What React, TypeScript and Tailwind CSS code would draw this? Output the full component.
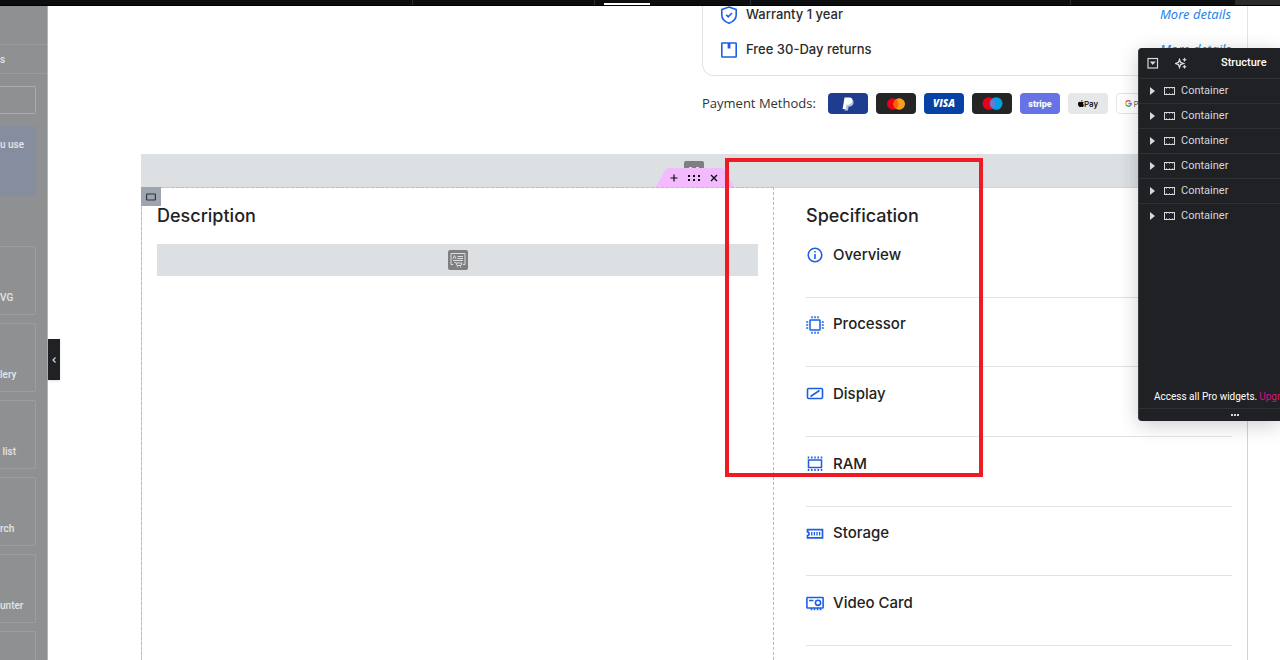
import React from 'react';

const widgetCards = ['VG', 'lery', ' list', 'rch', 'unter', ''];

const containers = [1, 2, 3, 4, 5, 6];

const InfoIcon = () => (
  <svg className="h-[18px] w-[18px]" viewBox="1 1 18 18" fill="none" stroke="#1a5fe6" strokeWidth="1.6">
    <circle cx="10" cy="10" r="6.8" />
    <path d="M10 9v5M10 6v1.6" />
  </svg>
);

const ProcessorIcon = () => (
  <svg className="h-[18px] w-[18px]" viewBox="1 1 18 18" fill="none" stroke="#1a5fe6" strokeWidth="1.5">
    <rect x="5" y="5" width="10" height="10" rx="0.6" />
    <path d="M7 1.2v2M10 1.2v2M13 1.2v2M7 16.8v2M10 16.8v2M13 16.8v2M1.2 7h2M1.2 10h2M1.2 13h2M16.8 7h2M16.8 10h2M16.8 13h2" />
  </svg>
);

const DisplayIcon = () => (
  <svg className="h-[18px] w-[18px]" viewBox="1 1 18 18" fill="none" stroke="#1a5fe6" strokeWidth="1.6">
    <rect x="2.5" y="4.5" width="15" height="10" rx="1.2" />
    <path d="M5.5 12.5l9-6" />
  </svg>
);

const RamIcon = () => (
  <svg className="h-[18px] w-[18px]" viewBox="1 1 18 18" fill="none" stroke="#1a5fe6" strokeWidth="1.5">
    <rect x="3.5" y="6" width="13" height="7.5" />
    <path d="M3.5 2.5v2M6.8 2.5v2M10 2.5v2M13.2 2.5v2M16.5 2.5v2M3.5 15v2M6.8 15v2M10 15v2M13.2 15v2M16.5 15v2" />
  </svg>
);

const StorageIcon = () => (
  <svg className="h-[18px] w-[18px]" viewBox="1 1 18 18" fill="none" stroke="#1a5fe6" strokeWidth="1.7">
    <path d="M2.5 5.6h15v8.2h-15v-2.2c2 0 2-3.8 0-3.8z" />
    <path d="M6.8 8v3.4M9.4 8v3.4M12 8v3.4M14.6 8v3.4" strokeWidth="1.3" />
  </svg>
);

const VideoCardIcon = () => (
  <svg className="h-[18px] w-[18px]" viewBox="1 1 18 18" fill="none" stroke="#1a5fe6" strokeWidth="1.6">
    <rect x="1.9" y="4.5" width="16.2" height="10.5" rx="0.6" />
    <circle cx="13" cy="9.8" r="2.6" />
    <path d="M4 7.5h4.5M6.5 15v2.2M9.5 15v2.2M12.5 15v2.2M15.5 15v2.2" />
  </svg>
);

const specs = [
  { name: 'Overview', icon: InfoIcon },
  { name: 'Processor', icon: ProcessorIcon },
  { name: 'Display', icon: DisplayIcon },
  { name: 'RAM', icon: RamIcon },
  { name: 'Storage', icon: StorageIcon },
  { name: 'Video Card', icon: VideoCardIcon },
];

const TopBar: React.FC = () => (
  <div className="flex h-[6px] shrink-0 border-b border-black bg-[#0c0d0e]">
    <div className="w-[413px] border-r border-[#2b2c2e]" />
    <div className="w-[182px] border-r border-[#2b2c2e]" />
    <div className="flex w-[156px] items-end border-r border-[#2b2c2e] pl-[9px]">
      <div className="h-0.5 w-[46px] bg-white" />
    </div>
    <div className="w-[320px] border-r border-[#2b2c2e]" />
    <div className="flex-1" />
    <div className="w-[45px] bg-[#2b2b2c]" />
  </div>
);

const Sidebar: React.FC = () => (
  <aside className="w-12 shrink-0 overflow-hidden border-r border-[#b3b4b6] bg-[#8e9092] font-['Roboto',sans-serif] text-[10px] font-medium text-[#e3e5e8]">
    <div className="h-[39px] border-b border-[#999b9d]" />
    <div className="flex h-[29px] items-center border-b border-[#999b9d]">s</div>
    <input
      aria-label="Search widgets"
      className="mt-3 block h-7 w-9 rounded-r-xs border border-l-0 border-[#aaacae] bg-transparent"
    />
    <div className="mt-3 h-[70px] w-9 rounded-r-xs bg-[#868d9f] pt-3 leading-[14px] whitespace-nowrap">
      u use
    </div>
    <div className="mt-[50px] flex flex-col gap-2">
      {widgetCards.map((label, index) => (
        <div
          key={index}
          className="flex h-[69px] w-9 shrink-0 items-end rounded-r-xs border border-l-0 border-[#9c9ea0] pb-[9px] leading-[14px] whitespace-pre"
        >
          {label}
        </div>
      ))}
    </div>
  </aside>
);

const PaymentMethods: React.FC = () => (
  <div className="mt-[17px] ml-[561px] flex h-[21px] items-center gap-2">
    <span className="mr-2 w-[110px] shrink-0 font-['Open_Sans',sans-serif] text-[13px] font-medium whitespace-nowrap text-[#333]">
      Payment Methods:
    </span>
    <div className="flex h-[21px] w-10 shrink-0 items-center justify-center rounded bg-[#1f3d8f]">
      <svg className="h-4 w-4" viewBox="0 0 16 16">
        <path d="M5.5 3.5h5c2.8 0 3.6 2 2.8 4.2-.7 2-2.2 2.8-4.6 2.8l-.8 4H4.5z" fill="#b8c3df" />
        <path d="M4.5 1.5h4.8c2.6 0 3.6 1.6 3 3.8-.6 2.4-2.2 3.4-4.6 3.4H6.4l-.8 4.3H2.6z" fill="#fff" />
      </svg>
    </div>
    <div className="flex h-[21px] w-10 shrink-0 items-center justify-center rounded bg-[#252525]">
      <svg className="h-3 w-5" viewBox="0 0 20 12">
        <circle cx="6.8" cy="6" r="5.8" fill="#eb001b" />
        <circle cx="13.2" cy="6" r="5.8" fill="#f79e1b" />
        <path d="M10 1.2a5.8 5.8 0 0 1 0 9.6a5.8 5.8 0 0 1 0-9.6z" fill="#ff5f00" />
      </svg>
    </div>
    <div className="flex h-[21px] w-10 shrink-0 items-center justify-center rounded bg-[#0642a5] font-['Open_Sans',sans-serif] text-[10px] font-extrabold text-white italic">
      VISA
    </div>
    <div className="flex h-[21px] w-10 shrink-0 items-center justify-center rounded bg-[#252525]">
      <svg className="h-[13px] w-[21px]" viewBox="0 0 21 13">
        <circle cx="6.8" cy="6.5" r="6.3" fill="#eb001b" />
        <circle cx="14.2" cy="6.5" r="6.3" fill="#00a2e5" />
        <path d="M10.5 1.4a6.3 6.3 0 0 1 0 10.2a6.3 6.3 0 0 1 0-10.2z" fill="#7375cf" />
      </svg>
    </div>
    <div className="flex h-[21px] w-10 shrink-0 items-center justify-center rounded bg-[#6772e5] font-['Roboto',sans-serif] text-[9px] leading-3 font-extrabold text-white">
      stripe
    </div>
    <div className="flex h-[21px] w-10 shrink-0 items-center justify-center rounded bg-[#e6e7e9] font-['Inter',sans-serif] text-[8px] font-medium text-black">
      <svg className="h-[7px] w-[6px]" viewBox="0 0 12 14">
        <path d="M8.8 0c0 1.6-1.2 3-2.8 3.1C5.9 1.6 7.2.2 8.8 0zM11.6 4.9C9.5 6.2 9.7 8.9 12 9.9 11.3 12 10 14 8.7 14c-1 0-1.3-.6-2.5-.6S4.600 14 3.700 14C1.900 14 0 10.700 0 8c0-2.800 1.700-4.400 3.500-4.400 1.100 0 2 .7 2.700.7s1.700-.8 3-.8c.9 0 1.800.5 2.400 1.400z" />
      </svg>
      Pay
    </div>
    <div className="flex h-[21px] w-10 shrink-0 items-center justify-center gap-0.5 rounded border border-[#e3e4e6] bg-white font-['Inter',sans-serif] text-[8px] text-[#5f6368]">
      <svg className="h-[7px] w-[7px]" viewBox="0 0 14 14" fill="none" strokeWidth="2.6">
        <path d="M11 3A5.6 5.6 0 0 0 2.2 4.2" stroke="#ea4335" />
        <path d="M2.2 4.2a5.6 5.6 0 0 0 0 5.6" stroke="#fbbc04" />
        <path d="M2.2 9.8A5.6 5.6 0 0 0 10.8 11" stroke="#34a853" />
        <path d="M10.8 11a5.6 5.6 0 0 0 1.8-4H7" stroke="#4285f4" />
      </svg>
      Pay
    </div>
  </div>
);

const ProductInfo: React.FC = () => (
  <div className="ml-[561px] flex h-[70px] flex-col justify-end gap-[15px] overflow-hidden rounded-b-xl border border-t-0 border-[#e2e3e5] pr-4 pb-[15px] pl-4 font-['Inter',sans-serif] text-[13px] font-medium text-[#2b2b2b]">
    <div className="flex h-5 shrink-0 items-center">
      <svg className="mr-[7px] h-5 w-5" viewBox="0 0 20 20" fill="none" stroke="#1a5fe6" strokeWidth="1.6">
        <path d="M10 2L2.8 4.5V10c0 4 3 6.8 7.2 8.3 4.2-1.5 7.2-4.3 7.2-8.3V4.5z" strokeLinejoin="round" />
        <path d="M7.2 9.8l2 2 3.8-3.8" />
      </svg>
      <span className="flex-1">Warranty 1 year</span>
      <a href="#" className="font-['Noto_Sans',sans-serif] font-normal text-[#2b83ea] italic">More details</a>
    </div>
    <div className="flex h-5 shrink-0 items-center">
      <svg className="mr-[7px] h-5 w-5" viewBox="0 0 20 20" fill="none" stroke="#1a5fe6" strokeWidth="1.6">
        <rect x="2.8" y="3" width="14.4" height="14" rx="0.6" />
        <path d="M10 3v5.5" strokeWidth="2.8" />
      </svg>
      <span className="flex-1">Free 30-Day returns</span>
      <a href="#" className="font-['Noto_Sans',sans-serif] font-normal text-[#2b83ea] italic">More details</a>
    </div>
  </div>
);

const SectionHandle: React.FC = () => (
  <>
    <div className="absolute top-[7px] left-[543px] h-5 w-5 rounded-xs bg-[#7d7f81] p-1">
      <svg className="h-3 w-3" viewBox="0 0 12 12" fill="none" stroke="#d5d8dc">
        <path d="M1 2.5h3M8 2.5h3" />
      </svg>
    </div>
    <div className="absolute top-3.5 left-[515px] flex h-[19px] w-[78px] items-center justify-center pr-0.5">
      <svg className="absolute inset-0 h-full w-full" viewBox="0 0 78 19">
        <path d="M0 19L8.5 3Q10 0 13 0H65Q68 0 69.5 3L78 19z" fill="#f3bafd" />
      </svg>
      <div className="relative flex items-center">
        <button aria-label="Add" className="flex h-4 w-5 items-center justify-center">
          <svg className="h-2 w-2" viewBox="0 0 8 8" stroke="#0c0d0e" strokeWidth="1.2">
            <path d="M4 0.5v7M0.5 4h7" />
          </svg>
        </button>
        <button aria-label="Edit container" className="flex h-4 w-5 items-center justify-center">
          <svg className="h-2 w-3" viewBox="0 0 12 8" fill="#0c0d0e">
            <path d="M0 1h2v2H0zM5 1h2v2H5zM10 1h2v2h-2zM0 5h2v2H0zM5 5h2v2H5zM10 5h2v2h-2z" />
          </svg>
        </button>
        <button aria-label="Delete" className="flex h-4 w-5 items-center justify-center">
          <svg className="h-2 w-2" viewBox="0 0 8 8" stroke="#0c0d0e" strokeWidth="1.3">
            <path d="M1 1l6 6M7 1l-6 6" />
          </svg>
        </button>
      </div>
    </div>
  </>
);

const Editor: React.FC = () => (
  <main className="mr-8 ml-[93px] flex min-w-0 flex-1 flex-col">
    <ProductInfo />
    <PaymentMethods />

    <div className="relative mt-10 h-[33px] shrink-0 bg-[#dce0e3]">
      <SectionHandle />
    </div>

    <div className="flex flex-1 border border-b-0 border-[#f3bafd] font-['Inter',sans-serif] text-[#222]">
      {/* Description column */}
      <section className="relative -mt-px -ml-px w-[633px] shrink-0 border border-b-0 border-dashed border-[#b9bcc8] px-[15px] pt-4">
        <button
          aria-label="Edit column"
          className="absolute -top-px -left-px flex h-[19px] w-5 items-center justify-center bg-[#9da5ae]"
        >
          <svg className="h-2 w-2.5" viewBox="0 0 10 8" fill="none" stroke="#30363c" strokeWidth="1.2">
            <rect x="0.6" y="1" width="8.8" height="6" rx="0.5" />
          </svg>
        </button>
        <h2 className="text-[18px] leading-6 font-medium">Description</h2>
        <div className="mt-4 flex h-8 items-center justify-center bg-[#dce0e3]">
          <svg className="h-5 w-5" viewBox="0 0 20 20" fill="none" stroke="#dcdfe2">
            <rect width="20" height="20" rx="2" fill="#7d7f81" stroke="none" />
            <path d="M5 14.5H3V3.5h14v11h-2M9.5 6.5H15M9.5 8.5H15M5 10.5h10M5 8.8L6.5 5.5 8 8.8M6.5 12.5h1.5l1 3h4l1-2.5H8.5" />
            <path d="M9 17h1M12 17h1" />
          </svg>
        </div>
      </section>

      {/* Specification column */}
      <section className="flex-1 pt-4 pr-[15px] pl-8">
        <h2 className="text-[18px] leading-6 font-medium">Specification</h2>
        <ul className="grid h-[418px] grid-rows-6">
          {specs.map(({ name, icon: Icon }) => (
            <li key={name} className="border-b border-[#e2e3e5] pt-[15px]">
              <div className="flex h-6 items-center gap-[9px] text-[15px] font-medium">
                <Icon />
                {name}
              </div>
            </li>
          ))}
        </ul>
      </section>
    </div>
  </main>
);

const StructurePanel: React.FC = () => (
  <div className="absolute top-12 right-0 flex h-[373px] w-[142px] flex-col overflow-hidden rounded-l border-l border-[#3a3c40] bg-[#1f2124] font-['Roboto',sans-serif] text-[11px] text-[#d5d8dc] shadow-[0_4px_20px_rgba(0,0,0,0.2)]">
    <div className="flex h-[30px] shrink-0 items-center pl-2">
      <button aria-label="Expand all" className="w-7">
        <svg className="h-3 w-3" viewBox="0 0 12 12" fill="none" stroke="#d5d8dc" strokeWidth="1.2">
          <rect x="1" y="1.5" width="9.5" height="9.5" />
          <path d="M2.8 4.6h6L5.8 8z" fill="#d5d8dc" stroke="none" />
        </svg>
      </button>
      <button aria-label="Generate" className="w-[46px]">
        <svg className="h-3 w-3" viewBox="0 0 12 12" fill="#d5d8dc">
          <path d="M4.5 2.5l1.1 2.9L8.5 6.5 5.6 7.6 4.5 10.5 3.4 7.6.5 6.5l2.9-1.1z" fill="none" stroke="#d5d8dc" strokeWidth="1.3" />
          <path d="M9.5.4l.8 1.5 1.5.8-1.5.8-.8 1.5-.8-1.5-1.5-.8 1.5-.8zM9.5 7.4l.8 1.5 1.5.8-1.5.8-.8 1.5-.8-1.5-1.5-.8 1.5-.8z" />
        </svg>
      </button>
      <h2 className="font-medium text-white">Structure</h2>
    </div>
    <ul>
      {containers.map((id) => (
        <li key={id} className="border-t border-[#2e3034]">
          <button className="flex h-6 w-full items-center pl-[11px]">
            <svg className="mr-[9px] h-2 w-[5px]" viewBox="0 0 5 8" fill="#d5d8dc">
              <path d="M0 0L5 4 0 8z" />
            </svg>
            <svg className="mr-[6px] h-2 w-[11px]" viewBox="0 0 11 8" fill="none" stroke="#d5d8dc">
              <rect x="0.5" y="0.5" width="10" height="7" />
              <path d="M2 1.5h7M2 6.5h7" strokeDasharray="1 2" strokeOpacity="0.6" />
            </svg>
            Container
          </button>
        </li>
      ))}
    </ul>
    <div className="mt-auto flex h-6 items-center gap-0.5 pl-[15px] text-[10px] whitespace-nowrap text-white">
      Access all Pro widgets.
      <a href="#" className="text-[#d0157f]">Upgra</a>
    </div>
    <div className="flex h-[13px] shrink-0 items-center border-t border-[#2e3034] pl-[92px]">
      <svg className="h-0.5 w-2" viewBox="0 0 8 2" fill="#d5d8dc">
        <path d="M0 0h2v2H0zM3 0h2v2H3zM6 0h2v2H6z" />
      </svg>
    </div>
  </div>
);

export default function App() {
  return (
    <div className="relative flex h-screen flex-col overflow-hidden bg-white">
      <TopBar />
      <div className="flex min-h-0 flex-1">
        <Sidebar />
        <Editor />
      </div>

      <button
        aria-label="Collapse panel"
        className="absolute top-[339px] left-12 flex h-[41px] w-3 items-center justify-center bg-[#1f2124] shadow-sm"
      >
        <svg className="h-1.5 w-1" viewBox="0 0 4 6" fill="none" stroke="#d5d8dc" strokeWidth="1.2">
          <path d="M3.5 0.5L1 3l2.5 2.5" />
        </svg>
      </button>

      <StructurePanel />

      {/* Highlighted area */}
      <div className="pointer-events-none absolute top-[158px] left-[725px] h-[319px] w-[258px] border-4 border-[#ed1c24]" />
    </div>
  );
}
